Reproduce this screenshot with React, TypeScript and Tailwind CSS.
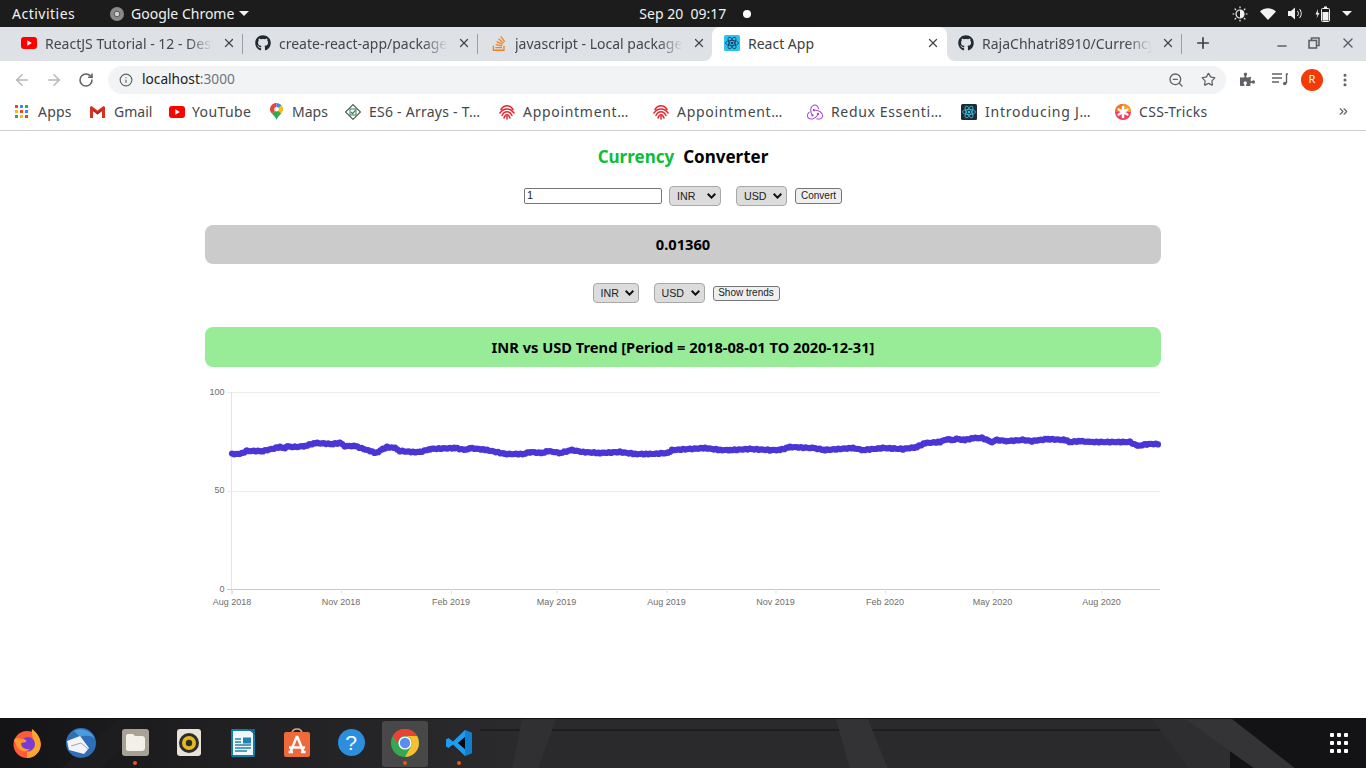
import React from 'react';
import { ArrowLeft, ArrowRight, RotateCw, Info, ZoomOut, Star, X, Plus, Minus, ChevronsRight, MoreVertical } from 'lucide-react';
import { FaGithub, FaStackOverflow, FaPuzzlePiece } from 'react-icons/fa';
import { SiRedux } from 'react-icons/si';

const UI = "font-['Noto_Sans',sans-serif]";

const YouTubeIcon = () => (
  <svg width="16" height="12" viewBox="0 0 16 12">
    <rect width="16" height="12" rx="3" fill="#f00" />
    <path d="M6.3 3.2 L10.8 6 L6.3 8.8 Z" fill="#fff" />
  </svg>
);

const ReactIcon = ({ bg, fg }: { bg: string; fg: string }) => (
  <svg width="16" height="16" viewBox="0 0 16 16">
    <rect width="16" height="16" rx="1.5" fill={bg} />
    <g fill="none" stroke={fg} strokeWidth="0.8">
      <ellipse cx="8" cy="8" rx="6.5" ry="2.6" />
      <ellipse cx="8" cy="8" rx="6.5" ry="2.6" transform="rotate(60 8 8)" />
      <ellipse cx="8" cy="8" rx="6.5" ry="2.6" transform="rotate(120 8 8)" />
    </g>
    <circle cx="8" cy="8" r="1.3" fill={fg} />
  </svg>
);

const AppsIcon = () => {
  const colors = ['#ea4335', '#4285f4', '#34a853', '#fbbc05', '#ea4335', '#4285f4', '#34a853', '#fbbc05', '#ea4335'];
  return (
    <div className="grid grid-cols-3 gap-[2px] w-[13px] -ml-[3px]">
      {colors.map((c, i) => (
        <div key={i} className="w-[3px] h-[3px]" style={{ background: c }} />
      ))}
    </div>
  );
};

const GmailIcon = () => (
  <svg width="15" height="12" viewBox="0 0 15 12" className="-ml-[1px]">
    <path d="M0 1 L0 12 L3 12 L3 5 L7.5 8.5 L12 5 L12 12 L15 12 L15 1 L13.5 0 L7.5 4.6 L1.5 0 Z" fill="#d93025" />
    <path d="M3 5 L7.5 8.5 L12 5 L12 3 L7.5 6.4 L3 3 Z" fill="#b3261e" />
  </svg>
);

const MapsIcon = () => (
  <svg width="13" height="17" viewBox="0 0 13 17" className="-ml-[3px]">
    <path d="M6.5 0 C3 0 0 2.7 0 6.3 C0 8 .8 9.3 1.8 10.6 L6.5 6.5 Z" fill="#ea4335" />
    <path d="M6.5 0 C8.6 0 10.4 1 11.6 2.5 L6.5 6.5 Z" fill="#4285f4" />
    <path d="M11.6 2.5 C12.5 3.6 13 4.9 13 6.3 C13 8 12.2 9.2 11.2 10.5 L6.5 6.5 Z" fill="#fbbc05" />
    <path d="M1.8 10.6 L6.5 6.5 L11.2 10.5 C9.5 12.6 7.3 14.4 6.5 17 C5.7 14.4 3.5 12.6 1.8 10.6 Z" fill="#34a853" />
    <circle cx="6.5" cy="6.3" r="2.3" fill="#fff" />
  </svg>
);

const Es6Icon = () => (
  <svg width="16" height="16" viewBox="0 0 16 16">
    <rect x="2.8" y="2.8" width="10.4" height="10.4" transform="rotate(45 8 8)" fill="#fff" stroke="#555" strokeWidth="1.1" />
    <rect x="5" y="5" width="6" height="6" fill="none" stroke="#3c8f5c" strokeWidth="1.1" />
    <path d="M6 8 L7.6 9.6 L10.4 6.4" fill="none" stroke="#2e7d4f" strokeWidth="1.2" />
  </svg>
);

const AppointmentIcon = () => (
  <svg width="16" height="16" viewBox="0 0 16 16" fill="none" stroke="#e8262c" strokeWidth="1.5" strokeLinecap="round">
    <path d="M2 5.5 C5 0.5 11 0.5 14 5.5" />
    <path d="M1 9 C4.5 3.5 11.5 3.5 15 9" />
    <path d="M3 11.5 C5.5 6.5 10.5 6.5 13 11.5" />
    <path d="M5 14 C6.5 9.8 9.5 9.8 11 14" />
    <path d="M8 12.5 L8 15" />
  </svg>
);

const CssTricksIcon = () => (
  <svg width="16" height="16" viewBox="0 0 16 16">
    <circle cx="8" cy="8" r="8" fill="#f23d5c" />
    <path d="M8 0 A8 8 0 0 1 16 8 L8 8 Z" fill="#f7a11a" />
    <path d="M0 8 A8 8 0 0 1 8 0 L8 8 Z" fill="#f7741a" />
    <g stroke="#fff" strokeWidth="2.6" strokeLinecap="round">
      <path d="M8 3 L8 13" />
      <path d="M3.7 5.5 L12.3 10.5" />
      <path d="M3.7 10.5 L12.3 5.5" />
    </g>
  </svg>
);

const tabs = [
  { title: 'ReactJS Tutorial - 12 - Destructuring', icon: <YouTubeIcon />, sep: true, pad: 'pl-[13px]' },
  { title: 'create-react-app/packages/react', icon: <FaGithub size={16} color="#24292e" />, sep: true, pad: 'pl-[12px]' },
  { title: 'javascript - Local package.json', icon: <FaStackOverflow size={17} color="#f48024" />, sep: false, pad: 'pl-[13px]' },
  { title: 'React App', icon: <ReactIcon bg="#29c5f0" fg="#1b3a63" />, active: true, sep: false, pad: 'pl-[12px]' },
  { title: 'RajaChhatri8910/CurrencyConverter', icon: <FaGithub size={16} color="#24292e" />, sep: true, pad: 'pl-[11px]' },
];

const bookmarks = [
  { label: 'Apps', w: 'w-[75px]', icon: <AppsIcon />, text: 'ml-[7px] tracking-[0.2px]' },
  { label: 'Gmail', w: 'w-[79px]', icon: <GmailIcon />, text: 'ml-[8px]' },
  { label: 'YouTube', w: 'w-[101px]', icon: <YouTubeIcon />, text: 'ml-[7px] tracking-[0.4px]' },
  { label: 'Maps', w: 'w-[75px]', icon: <MapsIcon />, text: 'ml-[6px]' },
  { label: 'ES6 - Arrays - T…', w: 'w-[154px]', icon: <Es6Icon />, text: 'ml-[8px] tracking-[0.25px]' },
  { label: 'Appointment…', w: 'w-[154px]', icon: <AppointmentIcon />, text: 'ml-[8px] tracking-[0.7px]' },
  { label: 'Appointment…', w: 'w-[154px]', icon: <AppointmentIcon />, text: 'ml-[8px] tracking-[0.7px]' },
  { label: 'Redux Essenti…', w: 'w-[154px]', icon: <SiRedux size={16} color="#a43fd8" />, text: 'ml-[8px] tracking-[0.65px]' },
  { label: 'Introducing J…', w: 'w-[154px]', icon: <ReactIcon bg="#1c2b36" fg="#3fc3e8" />, text: 'ml-[8px] tracking-[0.75px]' },
  { label: 'CSS-Tricks', w: 'w-[100px]', icon: <CssTricksIcon />, text: 'ml-[8px] tracking-[0.3px]' },
];

// Rates as traced off the chart, in page pixels
const trend = [
  [232, 454], [240, 454], [247, 451], [263, 451], [280, 447], [285, 448], [288, 446.5], [295, 447], [305, 446], [315, 443],
  [333, 444], [340, 443], [345, 446], [355, 446], [370, 451], [376, 453], [383, 449], [387, 447], [395, 448], [400, 451],
  [413, 452], [420, 452], [430, 449], [455, 448], [465, 450], [470, 448], [487, 450], [505, 454], [523, 454], [530, 452],
  [542, 453], [548, 451], [560, 453], [572, 450], [583, 452], [600, 453], [620, 452], [635, 454], [650, 454], [668, 453],
  [672, 450], [690, 449], [705, 448], [720, 450], [730, 450], [750, 449], [770, 450], [780, 450], [790, 447], [813, 448],
  [825, 450], [853, 448], [863, 450], [883, 448], [903, 449], [917, 447], [925, 443], [940, 442], [947, 439], [952, 440],
  [957, 439], [965, 440], [973, 438], [982, 438], [992, 442], [997, 440], [1007, 441], [1023, 440], [1032, 441], [1048, 439],
  [1065, 440], [1070, 442], [1080, 441], [1090, 442], [1123, 442], [1130, 442], [1138, 446], [1147, 444], [1160, 444],
];

const beads: number[][] = [];
for (let i = 0; i < trend.length - 1; i++) {
  const [x0, y0] = trend[i];
  const [x1, y1] = trend[i + 1];
  for (let x = x0; x < x1; x += 2.2) {
    const t = (x - x0) / (x1 - x0);
    beads.push([x, y0 + (y1 - y0) * t + Math.sin(x * 1.7) * 0.5]);
  }
}

const xTicks = [
  { x: 232, label: 'Aug 2018' },
  { x: 341, label: 'Nov 2018' },
  { x: 451, label: 'Feb 2019' },
  { x: 556.5, label: 'May 2019' },
  { x: 666.5, label: 'Aug 2019' },
  { x: 775.5, label: 'Nov 2019' },
  { x: 885, label: 'Feb 2020' },
  { x: 992.5, label: 'May 2020' },
  { x: 1101.5, label: 'Aug 2020' },
];

const TrendChart = () => (
  <svg width="960" height="225" viewBox="205 385 960 225" className="block">
    {[392.5, 491.5].map((y) => (
      <line key={y} x1="227" x2="1160" y1={y} y2={y} stroke="#ebebeb" />
    ))}
    <line x1="231.5" x2="231.5" y1="392" y2="594" stroke="#e4e4e4" />
    <line x1="227" x2="1160" y1="589.5" y2="589.5" stroke="#c8c8c8" />
    {xTicks.map((t) => (
      <g key={t.label}>
        <line x1={t.x + 0.5} x2={t.x + 0.5} y1="589" y2="594" stroke="#e4e4e4" />
        <text x={t.x} y="605" textAnchor="middle" fontSize="9" fill="#6e6e6e" fontFamily="'Liberation Sans', sans-serif">
          {t.label}
        </text>
      </g>
    ))}
    {[['100', 395], ['50', 493], ['0', 592]].map(([label, y]) => (
      <text key={label} x="224.5" y={y} textAnchor="end" fontSize="9" fill="#6e6e6e" fontFamily="'Liberation Sans', sans-serif">
        {label}
      </text>
    ))}
    {beads.map(([x, y], i) => (
      <circle key={i} cx={x} cy={y} r="3.1" fill="#4a36d6" />
    ))}
  </svg>
);

const selectCls =
  "appearance-none h-[20px] pl-[7px] pb-[1px] bg-[#dcdcdc] border border-[#a8a8a8] rounded-[4px] text-[10.67px] text-[#222] font-['Liberation_Sans',sans-serif]";
const buttonCls =
  "bg-[#efefef] border border-[#767676] rounded-[3px] pb-[1px] text-[10px] leading-none text-[#222] font-['Liberation_Sans',sans-serif]";

const CurrencySelect = ({ value, w, outer }: { value: string; w: string; outer?: string }) => (
  <div className={`relative flex ${outer ?? ''}`}>
    <select defaultValue={value} className={`${selectCls} ${w}`}>
      <option>INR</option>
      <option>USD</option>
      <option>EUR</option>
    </select>
    <svg width="9" height="6" viewBox="0 0 9 6" className="absolute right-[5px] top-[7px] pointer-events-none" fill="none" stroke="#111" strokeWidth="2">
      <path d="M0.7 0.8 L4.5 4.6 L8.3 0.8" />
    </svg>
  </div>
);

const TopBar = () => (
  <div className={`h-[27px] bg-[#1c1c1c] text-[#f2f2f2] text-[14px] flex items-center relative ${UI}`}>
    <span className="ml-3 w-[98px] tracking-[0.5px]">Activities</span>
    <svg width="14" height="14" viewBox="0 0 14 14">
      <circle cx="7" cy="7" r="7" fill="#8a8a8a" />
      <circle cx="7" cy="7" r="2.8" fill="#d0d0d0" stroke="#555" strokeWidth="1" />
    </svg>
    <span className="ml-[7px]">Google Chrome</span>
    <svg width="10" height="5" viewBox="0 0 10 5" className="ml-[5px]">
      <path d="M0 0 H10 L5 5 Z" fill="#f2f2f2" />
    </svg>
    <div className="ml-[390px] flex items-center">
      <span className="w-[104px]">Sep 20&nbsp; 09:17</span>
      <div className="w-[8px] h-[8px] rounded-full bg-white" />
    </div>
    <div className="ml-auto mr-[14px] flex items-center gap-[12px]">
      <svg width="16" height="16" viewBox="0 0 16 16" fill="none" stroke="#f2f2f2" strokeWidth="1.2">
        <circle cx="8" cy="8" r="4" />
        <path d="M8 4 A4 4 0 0 1 8 12 Z" fill="#f2f2f2" stroke="none" />
        <path d="M8 0.5 V2.3 M8 13.7 V15.5 M0.5 8 H2.3 M13.7 8 H15.5 M2.7 2.7 L4 4 M12 12 L13.3 13.3 M2.7 13.3 L4 12 M12 4 L13.3 2.7" />
      </svg>
      <svg width="16" height="12" viewBox="0 0 16 12">
        <path d="M0 3.5 C4.5 -0.8 11.5 -0.8 16 3.5 L8 12 Z" fill="#f2f2f2" />
      </svg>
      <svg width="15" height="13" viewBox="0 0 15 13" fill="none">
        <path d="M0 4 H3 L7 0.5 V12.5 L3 9 H0 Z" fill="#f2f2f2" />
        <path d="M9.5 4 C10.7 5.5 10.7 7.5 9.5 9 M11.5 2 C13.8 4.5 13.8 8.5 11.5 11" stroke="#f2f2f2" strokeWidth="1" />
      </svg>
      <svg width="15" height="16" viewBox="0 0 15 16" fill="none">
        <path d="M3 3 L0.5 8.5 H2.5 L1.5 12.5 L4.5 7 H2.8 Z" fill="#f2f2f2" />
        <rect x="6.5" y="2.5" width="8" height="13" rx="1" stroke="#f2f2f2" />
        <rect x="9" y="0.5" width="3" height="2" fill="#f2f2f2" />
        <rect x="7.5" y="6" width="6" height="8.5" fill="#f2f2f2" />
      </svg>
      <svg width="10" height="5" viewBox="0 0 10 5">
        <path d="M0 0 H10 L5 5 Z" fill="#f2f2f2" />
      </svg>
    </div>
  </div>
);

const TabStrip = () => (
  <div className={`relative z-10 h-[34px] bg-[#dee1e6] flex items-start pl-2 text-[14px] ${UI}`}>
    {tabs.map((tab) => (
      <div
        key={tab.title}
        className={`relative w-[235px] flex items-center pr-[7px] ${tab.pad} ${
          tab.active ? 'h-[37px] pb-[5px] bg-white rounded-t-[8px] text-[#3c4043] -ml-px' : 'h-[34px] pb-[2px] text-[#45474b]'
        }`}
      >
        {tab.active && (
          <>
            <div className="absolute -left-[8px] bottom-[3px] w-[8px] h-[8px] bg-white">
              <div className="w-full h-full bg-[#dee1e6] rounded-br-[8px]" />
            </div>
            <div className="absolute -right-[9px] bottom-[3px] w-[9px] h-[8px] bg-white">
              <div className="w-full h-full bg-[#dee1e6] rounded-bl-[8px]" />
            </div>
          </>
        )}
        <div className="w-[16px] flex justify-center shrink-0">{tab.icon}</div>
        <div
          className={`ml-[8px] flex-1 overflow-hidden whitespace-nowrap ${
            tab.active ? '' : '[mask-image:linear-gradient(to_right,black_85%,transparent)]'
          }`}
        >
          {tab.title}
        </div>
        <X size={14} strokeWidth={2.2} className="ml-[9px] shrink-0 text-[#45474b]" />
        {tab.sep && <div className="absolute right-0 top-[7px] h-[20px] w-px bg-[#9aa0a6]" />}
      </div>
    ))}
    <div className="h-[32px] flex items-center ml-[12px]">
      <Plus size={18} strokeWidth={2.2} className="text-[#3c4043]" />
    </div>
    <div className="h-[32px] flex items-center ml-[63px] gap-[19px] text-[#5f6368]">
      <Minus size={14} strokeWidth={2.2} className="mt-[6px]" />
      <svg width="12" height="12" viewBox="0 0 12 12" fill="none" stroke="#5f6368" strokeWidth="1.6">
        <rect x="1" y="3.5" width="7.5" height="7.5" />
        <path d="M3.5 3.5 V1 H11 V8.5 H8.5" />
      </svg>
      <X size={16} strokeWidth={2.2} className="ml-[1px]" />
    </div>
  </div>
);

const Toolbar = () => (
  <div className={`h-[37px] bg-white flex items-center ${UI}`}>
    <ArrowLeft size={18} strokeWidth={2} className="ml-[13px] text-[#b4b7bb]" />
    <ArrowRight size={18} strokeWidth={2} className="ml-[14px] text-[#b4b7bb]" />
    <RotateCw size={16} strokeWidth={2.3} className="ml-[15px] text-[#5f6368]" />
    <div className="ml-[14px] w-[1118px] h-[28px] rounded-full bg-[#f1f3f4] flex items-center pl-[11px] pr-[10px] text-[13.7px]">
      <Info size={14} strokeWidth={2} className="text-[#5f6368]" />
      <span className="ml-[9px] text-[#202124]">
        localhost<span className="text-[#70757a]">:3000</span>
      </span>
      <ZoomOut size={16} strokeWidth={2} className="ml-auto text-[#5f6368]" />
      <Star size={15} strokeWidth={2} className="ml-[17px] text-[#5f6368]" />
    </div>
    <FaPuzzlePiece size={15} color="#5f6368" className="ml-[14px]" />
    <svg width="16" height="13" viewBox="0 0 16 13" className="ml-[17px]" fill="none" stroke="#5f6368" strokeWidth="1.4">
      <path d="M0 1 H10 M0 5 H10 M0 9 H7" />
      <path d="M14.5 0.5 V10" />
      <circle cx="12.8" cy="10.5" r="1.8" fill="#5f6368" stroke="none" />
      <path d="M14.5 1 H16" />
    </svg>
    <div className="ml-[13px] w-[22px] h-[22px] rounded-full bg-[#f43a07] text-white text-[11px] flex items-center justify-center">
      R
    </div>
    <MoreVertical size={16} strokeWidth={2.6} className="ml-[14px] text-[#5f6368]" />
  </div>
);

const BookmarksBar = () => (
  <div className={`h-[33px] pb-[5px] bg-white border-b border-[#d0d1d3] flex items-center pl-[15px] text-[14px] text-[#45474b] ${UI}`}>
    {bookmarks.map((b, i) => (
      <div key={i} className={`${b.w} flex items-center whitespace-nowrap`}>
        <div className="w-[16px] flex justify-center shrink-0">{b.icon}</div>
        <span className={b.text}>{b.label}</span>
      </div>
    ))}
    <ChevronsRight size={13} strokeWidth={2.2} className="ml-[122px] text-[#5f6368]" />
  </div>
);

const Dot = () => <div className="absolute bottom-[3px] left-[25px] w-[4px] h-[4px] rounded-full bg-[#e95420]" />;

const dockIcons = [
  {
    key: 'firefox',
    icon: (
      <svg width="30" height="30" viewBox="0 0 30 30">
        <circle cx="15" cy="16.5" r="13.5" fill="#ff5a3c" />
        <path d="M20 1 C27 6 30.5 14 28 21 C26 26 21 30 15 30 L15 24 C20 24 23 20 22 15 C21.5 11 19 6 20 1 Z" fill="#ffa52e" />
        <circle cx="16" cy="16" r="7" fill="#7a3bd1" />
        <path d="M2 12 C5 9 8 11 10 11 C13 11 15 12 14 14 L9 15 C9 20 14 22 18 21 C15 25 8 24 5 19 Z" fill="#ff9a2e" />
      </svg>
    ),
  },
  {
    key: 'thunderbird',
    icon: (
      <svg width="30" height="30" viewBox="0 0 30 30">
        <circle cx="15" cy="15" r="15" fill="#2f6fb8" />
        <path d="M8 3 C15 -1 25 2 29 11 C26 7 19 7 14 9 Z" fill="#4a9be0" />
        <path d="M1 13 L14 8 L23 20 L18 26 L3 22 Z" fill="#f4f4f6" />
        <path d="M5 18 L15 15 L22 21" fill="none" stroke="#9aa7b8" strokeWidth="1" />
      </svg>
    ),
  },
  {
    key: 'files',
    dot: true,
    icon: (
      <div className="w-[27px] h-[27px] rounded-[3px] bg-[#a8a294] flex items-center justify-center">
        <svg width="20" height="17" viewBox="0 0 20 17">
          <path d="M1 2 C1 1 2 0 3 0 H8 L10 2 H17 C18.5 2 20 3 20 4.5 V14 C20 16 18.5 17 17 17 H3 C2 17 1 16 1 15 Z" fill="#f3f0ea" />
        </svg>
      </div>
    ),
  },
  {
    key: 'rhythmbox',
    icon: (
      <div className="w-[24px] h-[27px] rounded-[3px] bg-[#e8e3d8] flex items-center justify-center">
        <svg width="20" height="20" viewBox="0 0 20 20">
          <circle cx="10" cy="10" r="10" fill="#2e2c28" />
          <circle cx="10" cy="10" r="7" fill="#e5b81f" />
          <circle cx="10" cy="10" r="3.2" fill="#2e2c28" />
        </svg>
      </div>
    ),
  },
  {
    key: 'writer',
    icon: (
      <svg width="24" height="28" viewBox="0 0 24 28">
        <path d="M1.5 0 H17 L24 6 V26 C24 27 23 28 22 28 H2 C1 28 0 27 0 26 V1.5 C0 .7 .7 0 1.5 0 Z" fill="#0f7fa8" />
        <rect x="2" y="2" width="20" height="24" fill="#f2f6f8" />
        <path d="M17 0 L24 0 V6 Z" fill="#0f6d94" />
        <path d="M4 10 H10 M4 13 H10 M4 16 H20 M4 19 H20 M4 22 H16" stroke="#1f84ad" strokeWidth="1.5" />
        <rect x="12" y="8.5" width="8" height="6" fill="#1f84ad" />
      </svg>
    ),
  },
  {
    key: 'software',
    icon: (
      <svg width="26" height="29" viewBox="0 0 26 29">
        <path d="M8 6 C8 2 10 1 13 1 C16 1 18 2 18 6" fill="none" stroke="#d5a88a" strokeWidth="1.6" />
        <rect y="4" width="26" height="25" rx="2" fill="#f0693a" />
        <path d="M13 8 L19.5 24 M13 8 L6.5 24 M5 19.5 H21 M4.5 24 H9 M17 24 H21.5" stroke="#fff" strokeWidth="2.4" fill="none" />
      </svg>
    ),
  },
  {
    key: 'help',
    icon: (
      <div className="w-[27px] h-[27px] rounded-full bg-[#2b8fdd] text-white text-[21px] leading-none flex items-center justify-center font-['Liberation_Sans',sans-serif]">
        ?
      </div>
    ),
  },
  {
    key: 'chrome',
    dot: true,
    active: true,
    icon: (
      <svg width="28" height="28" viewBox="0 0 28 28">
        <circle cx="14" cy="14" r="14" fill="#34a853" />
        <path d="M1.9 6.9 A14 14 0 0 1 14 0 A14 14 0 0 1 26.1 7 H14 A7 7 0 0 0 7.9 17.5 L1.9 7 Z" fill="#ea4335" />
        <path d="M26.1 7 A14 14 0 0 1 14 28 L20 17.5 A7 7 0 0 0 14 7 Z" fill="#fbc02d" />
        <circle cx="14" cy="14" r="6.6" fill="#fff" />
        <circle cx="14" cy="14" r="5.2" fill="#5a8df0" />
      </svg>
    ),
  },
  {
    key: 'vscode',
    dot: true,
    icon: (
      <svg width="26" height="26" viewBox="0 0 26 26">
        <path d="M19 0 L26 3 V23 L19 26 L7 14.5 L2.5 18 L0 16.5 V9.5 L2.5 8 L7 11.5 Z M19 7 L12 13 L19 19 Z" fill="#1f9cf0" />
        <path d="M19 0 L26 3 V23 L19 26 Z" fill="#0f7fd0" />
        <path d="M19 7 L12 13 L19 19 Z" fill="#0b0b0f" />
      </svg>
    ),
  },
];

const Dock = () => (
  <div className="relative h-[50px] bg-[#2a2a2d] border-t border-[#111] flex items-center overflow-hidden">
    {/* wallpaper seen through the dock */}
    <svg width="1366" height="50" viewBox="0 0 1366 50" className="absolute left-0 top-0">
      <defs>
        <linearGradient id="wall" x1="0" x2="1" y1="0" y2="0">
          <stop offset="0" stopColor="#141416" />
          <stop offset="0.35" stopColor="#1e1e20" />
          <stop offset="1" stopColor="#2a2a2d" />
        </linearGradient>
      </defs>
      <rect width="500" height="50" fill="url(#wall)" />
      <path d="M60 50 L120 0 H150 L100 50 Z" fill="#1d1d1f" />
      <rect x="480" y="10" width="680" height="2" fill="#1d1c1e" />
      <path d="M512 50 L522 0 H556 L538 50 Z" fill="#303033" />
      <path d="M836 0 H868 L888 50 H850 Z" fill="#333335" />
      <path d="M1152 0 H1205 L1270 50 H1190 Z" fill="#2e2e30" />
      <rect x="1230" y="0" width="136" height="50" fill="#131315" />
      <path d="M1185 0 H1232 L1296 50 H1255 Z" fill="#343437" />
    </svg>
    {dockIcons.map((d) => (
      <div key={d.key} className="relative w-[54px] h-full flex items-center justify-center">
        {d.active && <div className="absolute left-[4px] top-[2px] w-[46px] h-[46px] rounded-[3px] bg-[#484848]" />}
        <div className="relative flex items-center justify-center -mt-[2px]">{d.icon}</div>
        {d.dot && <Dot />}
      </div>
    ))}
    <div className="relative ml-auto mr-[18px] -mt-[2px] grid grid-cols-3 gap-x-[3px] gap-y-[4px]">
      {Array.from({ length: 9 }).map((_, i) => (
        <div key={i} className="w-[4px] h-[4px] bg-white rounded-[1px]" />
      ))}
    </div>
  </div>
);

const App = () => {
  return (
    <div className="w-[1366px] h-[768px] flex flex-col overflow-hidden bg-white">
      <TopBar />
      <TabStrip />
      <Toolbar />
      <BookmarksBar />
      <main className="flex-1 w-[956px] mx-auto">
        <h1 className={`pt-[15px] h-[55px] text-center text-[17px] leading-[22px] font-bold ${UI}`}>
          <span className="text-[#0cbe38]">Currency</span>
          <span className="text-black ml-[9px]">Converter</span>
        </h1>
        <div className="flex justify-center items-center h-[20px]">
          <input
            defaultValue="1"
            className="w-[138px] h-[16px] border border-[#767676] rounded-[2px] px-[2px] pb-[1px] text-[11px] text-[#222] bg-white font-['Liberation_Sans',sans-serif]"
          />
          <CurrencySelect value="INR" w="w-[52px]" outer="ml-[7px]" />
          <CurrencySelect value="USD" w="w-[51px]" outer="ml-[15px]" />
          <button className={`${buttonCls} w-[47px] h-[16px] ml-[8px]`}>Convert</button>
        </div>
        <div className={`mt-[19px] h-[39px] pb-[2px] rounded-[8px] bg-[#cbcbcb] flex items-center justify-center text-[14.67px] font-bold text-black ${UI}`}>
          0.01360
        </div>
        <div className="mt-[19px] flex justify-center items-center h-[20px]">
          <CurrencySelect value="INR" w="w-[46px]" outer="ml-[6px]" />
          <CurrencySelect value="USD" w="w-[51px]" outer="ml-[15px]" />
          <button className={`${buttonCls} w-[67px] h-[15px] ml-[8px]`}>Show trends</button>
        </div>
        <div className={`mt-[24px] h-[40px] rounded-[8px] bg-[#98ec98] flex items-center justify-center text-[14.67px] font-bold text-black ${UI}`}>
          INR vs USD Trend [Period = 2018-08-01 TO 2020-12-31]
        </div>
        <div className="mt-[18px]">
          <TrendChart />
        </div>
      </main>
      <Dock />
    </div>
  );
};

export default App;
